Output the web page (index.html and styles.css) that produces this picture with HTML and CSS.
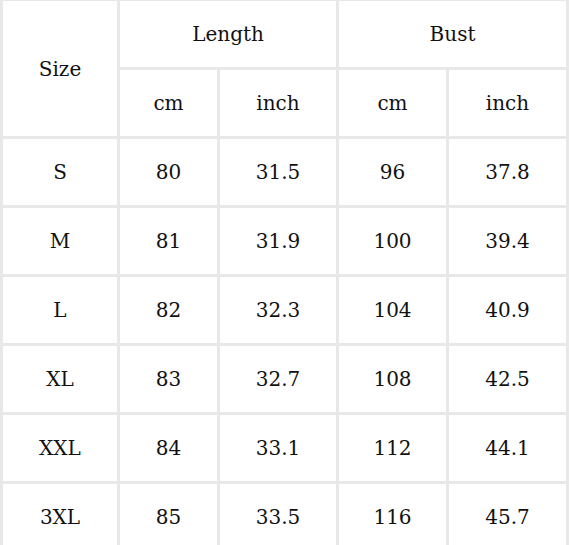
FILE: index.html
```html
<!DOCTYPE html>
<html>
<head>
<meta charset="utf-8">
<link rel="stylesheet" href="styles.css">
</head>
<body>
<div class="chart">
  <div class="cell size-head">Size</div>
  <div class="cell group">Length</div>
  <div class="cell group">Bust</div>
  <div class="cell">cm</div>
  <div class="cell">inch</div>
  <div class="cell">cm</div>
  <div class="cell">inch</div>

  <div class="cell">S</div><div class="cell">80</div><div class="cell">31.5</div><div class="cell">96</div><div class="cell">37.8</div>
  <div class="cell">M</div><div class="cell">81</div><div class="cell">31.9</div><div class="cell">100</div><div class="cell">39.4</div>
  <div class="cell">L</div><div class="cell">82</div><div class="cell">32.3</div><div class="cell">104</div><div class="cell">40.9</div>
  <div class="cell">XL</div><div class="cell">83</div><div class="cell">32.7</div><div class="cell">108</div><div class="cell">42.5</div>
  <div class="cell">XXL</div><div class="cell">84</div><div class="cell">33.1</div><div class="cell">112</div><div class="cell">44.1</div>
  <div class="cell">3XL</div><div class="cell">85</div><div class="cell">33.5</div><div class="cell">116</div><div class="cell">45.7</div>
</div>
</body>
</html>
```

FILE: styles.css
```css
html, body {
  margin: 0;
  padding: 0;
  background: #ffffff;
}

body {
  overflow: hidden;
  font-family: "DejaVu Serif", "Liberation Serif", serif;
  color: #111111;
}

.chart {
  display: grid;
  grid-template-columns: 114px 97px 116px 107px 117px;
  grid-auto-rows: 66px;
  gap: 3px;
  padding: 3px;
  margin-top: -2px;
  width: max-content;
  background: #e8e8e8;
}

.cell {
  background: #ffffff;
  display: flex;
  align-items: center;
  justify-content: center;
  font-size: 20px;
}

.size-head {
  grid-row: span 2;
}

.group {
  grid-column: span 2;
}
```
